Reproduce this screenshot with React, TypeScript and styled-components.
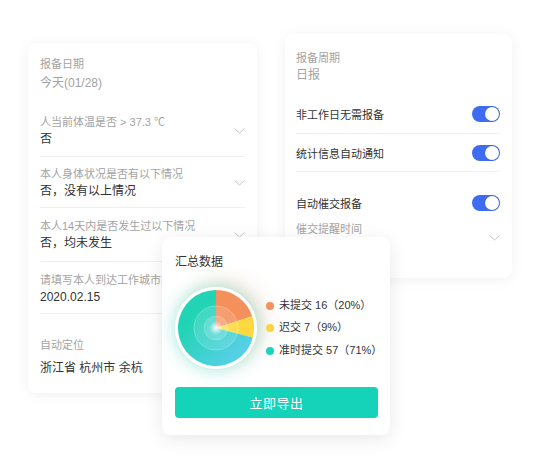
import React from "react";
import styled, { createGlobalStyle } from "styled-components";

const GlobalStyle = createGlobalStyle`
  body {
    margin: 0;
    background: #ffffff;
    font-family: "Liberation Sans", "Noto Sans CJK SC", sans-serif;
  }
`;

const Canvas = styled.div`
  position: relative;
  width: 535px;
  height: 460px;
  overflow: hidden;
  background: #fff;
`;

const Card = styled.div<{ $x: number; $y: number; $w: number; $h: number }>`
  position: absolute;
  left: ${(p) => p.$x}px;
  top: ${(p) => p.$y}px;
  width: ${(p) => p.$w}px;
  height: ${(p) => p.$h}px;
  box-sizing: border-box;
  background: #fff;
  border-radius: 8px;
  box-shadow: 0 2px 14px rgba(0, 0, 0, 0.06);
  display: flex;
  flex-direction: column;
`;

const FormCard = styled(Card)`
  padding: 13px 12px 0 12px;
`;

const SettingsCard = styled(Card)`
  padding: 16px 12px 0 11px;
`;

const SummaryCard = styled(Card)`
  padding: 16px 12px 0 13px;
  box-shadow: 0 4px 18px rgba(0, 0, 0, 0.09);
  z-index: 2;
`;

const Field = styled.div<{ $pt?: number; $pb?: number; $line?: boolean }>`
  display: flex;
  align-items: center;
  justify-content: space-between;
  padding-top: ${(p) => p.$pt ?? 0}px;
  padding-bottom: ${(p) => p.$pb ?? 0}px;
  border-bottom: ${(p) => (p.$line ? "1px solid #f0f0f0" : "none")};
`;

const FieldText = styled.div<{ $gap?: number }>`
  display: flex;
  flex-direction: column;
  gap: ${(p) => p.$gap ?? 0}px;
  white-space: nowrap;
`;

const Label = styled.span`
  font-size: 11px;
  line-height: 16px;
  color: #a3a3a3;
`;

const Value = styled.span<{ $muted?: boolean }>`
  font-size: 12px;
  line-height: 18px;
  color: ${(p) => (p.$muted ? "#a3a3a3" : "#333")};
`;

const ToggleRow = styled.div<{ $h: number; $mt?: number; $line?: boolean }>`
  height: ${(p) => p.$h}px;
  margin-top: ${(p) => p.$mt ?? 0}px;
  display: flex;
  align-items: center;
  justify-content: space-between;
  border-bottom: ${(p) => (p.$line ? "1px solid #f0f0f0" : "none")};
  font-size: 11px;
  color: #333;
`;

const PickerRow = styled.div`
  display: flex;
  align-items: flex-start;
  justify-content: space-between;
`;

const PickerChevron = styled.span`
  display: flex;
  padding-top: 14px;
`;

const Switch = styled.span`
  position: relative;
  width: 28px;
  height: 16px;
  border-radius: 8px;
  background: #3d6cf0;
  &::after {
    content: "";
    position: absolute;
    right: 1px;
    top: 1px;
    width: 14px;
    height: 14px;
    border-radius: 50%;
    background: #fff;
    box-shadow: 0 0 0 0.5px rgba(40, 70, 180, 0.4);
  }
`;

const Title = styled.div`
  font-size: 12px;
  line-height: 18px;
  color: #333;
`;

const ChartRow = styled.div`
  display: flex;
  align-items: center;
  gap: 9px;
  margin-top: 16px;
`;

const PieWrap = styled.div`
  width: 82px;
  height: 82px;
  border-radius: 50%;
  flex-shrink: 0;
  box-shadow: 0 0 18px rgba(38, 214, 190, 0.45), 8px -6px 18px rgba(246, 150, 100, 0.25);
`;

const Legend = styled.ul`
  list-style: none;
  margin: 0;
  padding: 0;
  display: flex;
  flex-direction: column;
  gap: 5px;
`;

const LegendItem = styled.li`
  display: flex;
  align-items: center;
  gap: 5px;
  font-size: 11px;
  line-height: 17.5px;
  color: #333;
  white-space: nowrap;
`;

const Dot = styled.span<{ $color: string }>`
  width: 8px;
  height: 8px;
  border-radius: 50%;
  background: ${(p) => p.$color};
`;

const ExportButton = styled.button`
  margin-top: 18px;
  height: 31px;
  width: 100%;
  border: none;
  border-radius: 4px;
  background: #14d3b9;
  color: #fff;
  font-family: inherit;
  font-size: 13px;
  letter-spacing: 0.5px;
`;

function Chevron() {
  return (
    <svg width="11" height="6" viewBox="0 0 11 6" fill="none">
      <polyline points="0.5,0.5 5.5,5 10.5,0.5" stroke="#c4c4c4" strokeWidth="1" />
    </svg>
  );
}

function arc(cx: number, cy: number, r: number, a0: number, a1: number) {
  const p = (a: number) => {
    const rad = (a * Math.PI) / 180;
    return `${cx + r * Math.sin(rad)},${cy - r * Math.cos(rad)}`;
  };
  const large = a1 - a0 > 180 ? 1 : 0;
  return `M${cx},${cy} L${p(a0)} A${r},${r} 0 ${large} 1 ${p(a1)} Z`;
}

function Pie() {
  const c = 41;
  const r = 38;
  return (
    <svg width="82" height="82" viewBox="0 0 82 82">
      <defs>
        <linearGradient id="teal" x1="0" y1="0" x2="1" y2="1">
          <stop offset="0.3" stopColor="#22d4b6" />
          <stop offset="0.85" stopColor="#58cfe8" />
        </linearGradient>
        <radialGradient id="core">
          <stop offset="0" stopColor="#fff" stopOpacity="0.9" />
          <stop offset="1" stopColor="#fff" stopOpacity="0" />
        </radialGradient>
      </defs>
      <circle cx={c} cy={c} r={41} fill="#fff" />
      <path d={arc(c, c, r, 0, 72)} fill="#f4905c" />
      <path d={arc(c, c, r, 72, 104.4)} fill="#fdd83f" />
      <path d={arc(c, c, r, 104.4, 360)} fill="url(#teal)" />
      <circle cx={c} cy={c} r={22} fill="#fff" fillOpacity="0.13" stroke="#fff" strokeOpacity="0.35" strokeWidth="0.8" />
      <circle cx={c} cy={c} r={12} fill="#fff" fillOpacity="0.16" stroke="#fff" strokeOpacity="0.3" strokeWidth="0.6" />
      <circle cx={c} cy={c} r={7} fill="url(#core)" />
    </svg>
  );
}

export default function App() {
  return (
    <Canvas>
      <GlobalStyle />
      <FormCard $x={28} $y={43} $w={229} $h={350}>
        <FieldText $gap={2}>
          <Label>报备日期</Label>
          <Value $muted>今天(01/28)</Value>
        </FieldText>
        <Field $pt={22} $pb={8} $line>
          <FieldText>
            <Label>人当前体温是否 &gt; 37.3 ℃</Label>
            <Value>否</Value>
          </FieldText>
          <Chevron />
        </Field>
        <Field $pt={9} $pb={7} $line>
          <FieldText>
            <Label>本人身体状况是否有以下情况</Label>
            <Value>否，没有以上情况</Value>
          </FieldText>
          <Chevron />
        </Field>
        <Field $pt={10} $pb={9} $line>
          <FieldText>
            <Label>本人14天内是否发生过以下情况</Label>
            <Value>否，均未发生</Value>
          </FieldText>
          <Chevron />
        </Field>
        <Field $pt={10} $pb={7} $line>
          <FieldText>
            <Label>请填写本人到达工作城市的日期</Label>
            <Value>2020.02.15</Value>
          </FieldText>
        </Field>
        <Field $pt={23}>
          <FieldText $gap={6}>
            <Label>自动定位</Label>
            <Value>浙江省 杭州市 余杭</Value>
          </FieldText>
        </Field>
      </FormCard>

      <SettingsCard $x={285} $y={34} $w={227} $h={244}>
        <FieldText>
          <Label>报备周期</Label>
          <Value $muted>日报</Value>
        </FieldText>
        <ToggleRow $h={38} $mt={11} $line>
          非工作日无需报备
          <Switch />
        </ToggleRow>
        <ToggleRow $h={37} $line>
          统计信息自动通知
          <Switch />
        </ToggleRow>
        <ToggleRow $h={36} $mt={13}>
          自动催交报备
          <Switch />
        </ToggleRow>
        <PickerRow>
          <Label>催交提醒时间</Label>
          <PickerChevron>
            <Chevron />
          </PickerChevron>
        </PickerRow>
      </SettingsCard>

      <SummaryCard $x={162} $y={237} $w={228} $h={198}>
        <Title>汇总数据</Title>
        <ChartRow>
          <PieWrap>
            <Pie />
          </PieWrap>
          <Legend>
            <LegendItem>
              <Dot $color="#f4905c" />
              未提交 16（20%）
            </LegendItem>
            <LegendItem>
              <Dot $color="#fdd43f" />
              迟交 7（9%）
            </LegendItem>
            <LegendItem>
              <Dot $color="#1ed3bd" />
              准时提交 57（71%）
            </LegendItem>
          </Legend>
        </ChartRow>
        <ExportButton>立即导出</ExportButton>
      </SummaryCard>
    </Canvas>
  );
}
